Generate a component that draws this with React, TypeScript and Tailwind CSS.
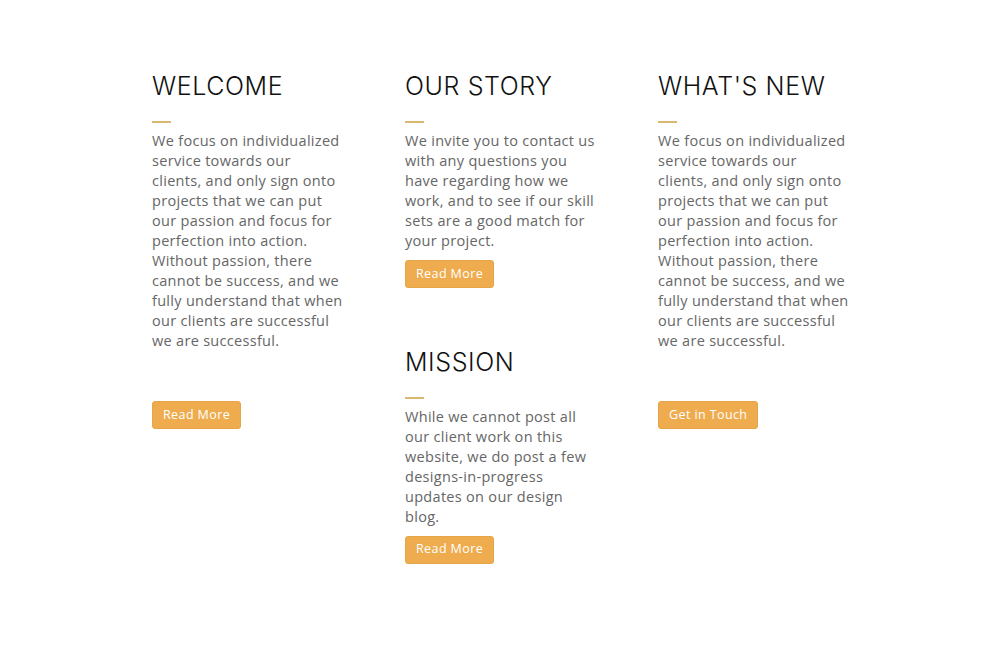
const body = "font-['Open_Sans',sans-serif] text-[14.5px] leading-[20px] tracking-[0.3px] text-[#666]";

function Heading({ children }: { children: React.ReactNode }) {
  return (
    <>
      <h2 className="font-['Inter',sans-serif] font-light text-[25px] leading-[30px] tracking-[0.6px] text-[#111] uppercase">
        {children}
      </h2>
      <div className="mt-[20px] mb-[8px] h-[2px] w-[19px] bg-[#d9b96e]" />
    </>
  );
}

function Button({ children }: { children: React.ReactNode }) {
  return (
    <button className="h-[28px] px-[10px] rounded-[3px] border border-[#e5a548] bg-[#eeac4e] text-white font-['Open_Sans',sans-serif] text-[12.5px] tracking-[0.4px]">
      {children}
    </button>
  );
}

export default function App() {
  return (
    <div className="min-h-[658px] bg-white pt-[71px] pl-[152px]">
      <div className="flex gap-[62px]">
        <div className="w-[191px]">
          <Heading>Welcome</Heading>
          <p className={body}>
            We focus on individualized service towards our clients, and only sign onto projects that we can put our passion and focus for perfection into action. Without passion, there cannot be success, and we fully understand that when our clients are successful we are successful.
          </p>
          <div className="mt-[50px]">
            <Button>Read More</Button>
          </div>
        </div>

        <div className="w-[191px]">
          <Heading>Our Story</Heading>
          <p className={body}>
            We invite you to contact us with any questions you have regarding how we work, and to see if our skill sets are a good match for your project.
          </p>
          <div className="mt-[9px]">
            <Button>Read More</Button>
          </div>

          <div className="mt-[59px]">
            <Heading>Mission</Heading>
          </div>
          <p className={body}>
            While we cannot post all our client work on this website, we do post a few designs-in-progress updates on our design blog.
          </p>
          <div className="mt-[8px]">
            <Button>Read More</Button>
          </div>
        </div>

        <div className="w-[191px]">
          <Heading>What's New</Heading>
          <p className={body}>
            We focus on individualized service towards our clients, and only sign onto projects that we can put our passion and focus for perfection into action. Without passion, there cannot be success, and we fully understand that when our clients are successful we are successful.
          </p>
          <div className="mt-[50px]">
            <Button>Get in Touch</Button>
          </div>
        </div>
      </div>
    </div>
  );
}
